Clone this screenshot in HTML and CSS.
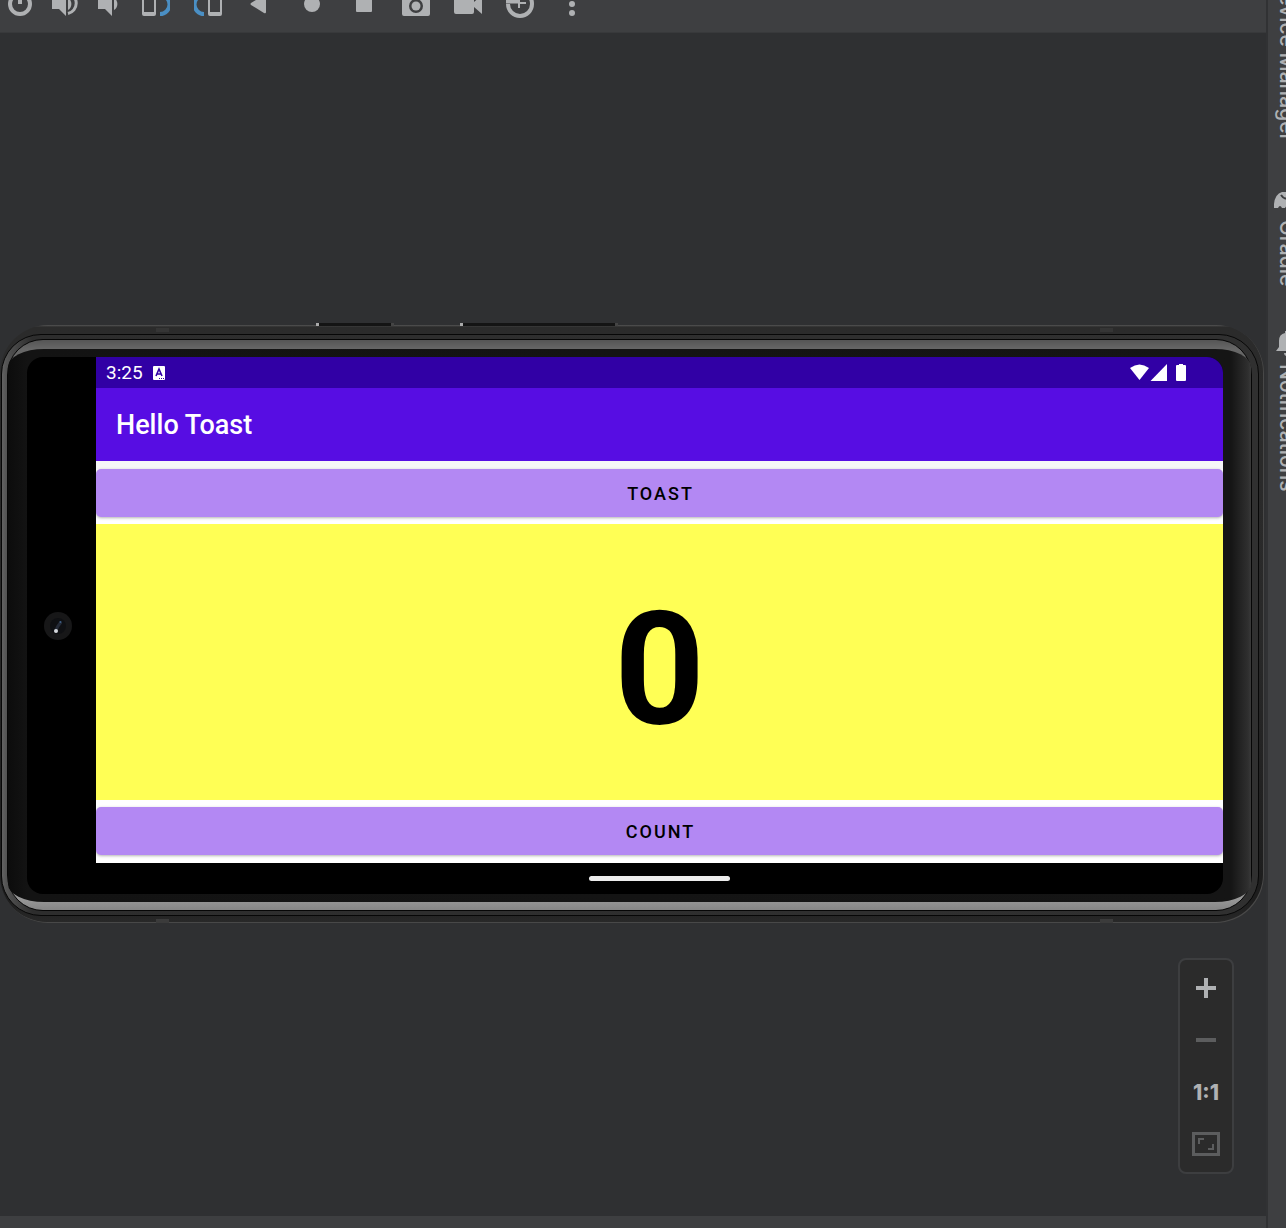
FILE: index.html
```html
<!DOCTYPE html>
<html lang="en">
<head>
<meta charset="utf-8">
<title>Running Devices</title>
<link rel="stylesheet" href="styles.css">
</head>
<body>
<main class="workspace">
  <div class="toolbar">
    <div class="tools tools-tight">
      <button class="tool" aria-label="Power"><svg viewBox="0 0 28 28"><circle cx="14" cy="14" r="10" fill="none" stroke="currentColor" stroke-width="4"/><path d="M12 4h4v10h-4z"/></svg></button>
      <button class="tool" aria-label="Volume up"><svg viewBox="0 0 28 28"><path d="M2 8h7l7-7v25l-7-7H2z"/><path d="M18 8a7 7 0 0 1 0 12z"/><path d="M18 3a10.500 10.500 0 0 1 0 20.500" fill="none" stroke="currentColor" stroke-width="3"/></svg></button>
      <button class="tool" aria-label="Volume down"><svg viewBox="0 0 28 28"><path d="M4 8h7l7-7v25l-7-7H4z"/><path d="M20 8a7 7 0 0 1 0 12z"/></svg></button>
    </div>
    <div class="tools">
      <button class="tool" aria-label="Rotate left"><svg viewBox="0 0 28 28"><path fill-rule="evenodd" d="M2 2h10a2 2 0 0 1 2 2v20a2 2 0 0 1-2 2H2a2 2 0 0 1-2-2V4a2 2 0 0 1 2-2zm0 3v17h10V5z"/><path class="accent" d="M18 5a9.500 9.500 0 0 1 0 19" /></svg></button>
      <button class="tool" aria-label="Rotate right"><svg viewBox="0 0 28 28"><path fill-rule="evenodd" d="M16 2h10a2 2 0 0 1 2 2v20a2 2 0 0 1-2 2H16a2 2 0 0 1-2-2V4a2 2 0 0 1 2-2zm0 3v17h10V5z"/><path class="accent" d="M10 5a9.500 9.500 0 0 0 0 19"/></svg></button>
      <button class="tool" aria-label="Back"><svg viewBox="0 0 28 28"><path d="M20 5v17q0 2-2 1L5 15q-1-1 0-2L18 5q2-1 2 0z"/></svg></button>
      <button class="tool" aria-label="Home"><svg viewBox="0 0 28 28"><circle cx="14" cy="14" r="8"/></svg></button>
      <button class="tool" aria-label="Overview"><svg viewBox="0 0 28 28"><rect x="6" y="6" width="16" height="16" rx="1"/></svg></button>
      <button class="tool" aria-label="Take screenshot"><svg viewBox="0 0 28 28"><path fill-rule="evenodd" d="M8 5l2-3h8l2 3h6a2 2 0 0 1 2 2v17a2 2 0 0 1-2 2H2a2 2 0 0 1-2-2V7a2 2 0 0 1 2-2zM14 9a7 7 0 1 0 0 14 7 7 0 0 0 0-14z"/><circle cx="14" cy="16" r="4.500"/></svg></button>
      <button class="tool" aria-label="Record screen"><svg viewBox="0 0 28 28"><path d="M2 4h16a2 2 0 0 1 2 2v6l8-7v19l-8-7v5a2 2 0 0 1-2 2H2a2 2 0 0 1-2-2V6a2 2 0 0 1 2-2z"/></svg></button>
      <button class="tool" aria-label="Snapshots"><svg viewBox="0 0 28 28"><path d="M0 11.500h12M2 14a12 12 0 0 0 24 0A12 12 0 0 0 6 5" fill="none" stroke="currentColor" stroke-width="4"/><path d="M13 8v10M13 13h7" fill="none" stroke="currentColor" stroke-width="2"/></svg></button>
      <button class="tool" aria-label="More"><svg viewBox="0 0 28 28"><circle cx="14" cy="5" r="3"/><circle cx="14" cy="14" r="3"/><circle cx="14" cy="23" r="3"/></svg></button>
    </div>
  </div>

  <section class="stage">
    <div class="device">
      <span class="side-key key-power"></span>
      <span class="side-key key-volume"></span>
      <span class="seam seam-top seam-left"></span>
      <span class="seam seam-top seam-right"></span>
      <span class="seam seam-bottom seam-left"></span>
      <span class="seam seam-bottom seam-right"></span>
      <div class="frame">
        <div class="gloss">
          <div class="bezel">
            <div class="screen">
              <div class="cutout">
                <svg class="lens" viewBox="0 0 28 28"><circle cx="14" cy="14" r="14" fill="#171718"/><circle cx="14" cy="14" r="8" fill="#0f1013"/><path d="M11 20l3-6 3-4" stroke="#252b38" stroke-width="3" fill="none"/><circle cx="12" cy="19" r="2" fill="#d5d8dc"/><circle cx="16.500" cy="10" r="1" fill="#3d5e86"/></svg>
              </div>
              <div class="app">
                <div class="status-bar">
                  <span>3:25</span>
                  <svg class="app-badge" viewBox="0 0 12 14"><rect width="12" height="14" rx="1" fill="#fff"/><path d="M3 10l3-7 3 7M4 8h4" stroke="#3100a5" stroke-width="1.600" fill="none"/><path d="M6 12.500h5" stroke="#3100a5" stroke-dasharray="1 1"/></svg>
                  <svg class="signals" viewBox="0 0 57 18"><path d="M0 4Q9.500-3 19 4L9.500 16z"/><path d="M37 0v17H20.500z"/><path d="M49 1V0h4v1h2a1 1 0 0 1 1 1v14a1 1 0 0 1-1 1h-8a1 1 0 0 1-1-1V2a1 1 0 0 1 1-1z"/></svg>
                </div>
                <h1 class="app-bar">Hello Toast</h1>
                <div class="content">
                  <button class="action">TOAST</button>
                  <output class="counter">0</output>
                  <button class="action">COUNT</button>
                </div>
                <div class="nav-bar"><span class="nav-handle"></span></div>
              </div>
            </div>
          </div>
        </div>
      </div>
    </div>

    <div class="zoom-controls">
      <button class="zoom-button" aria-label="Zoom in"><svg viewBox="0 0 28 28"><path d="M12 4h4v8h8v4h-8v8h-4v-8H4v-4h8z"/></svg></button>
      <button class="zoom-button dim" aria-label="Zoom out"><svg viewBox="0 0 28 28"><path d="M4 12h20v4H4z"/></svg></button>
      <button class="zoom-button">1:1</button>
      <button class="zoom-button dim" aria-label="Zoom to fit"><svg viewBox="0 0 28 28"><path fill-rule="evenodd" d="M0 2h28v24H0zm3 3v18h22V5zM6 8h6v2H8v4H6zM20 14h2v6h-6v-2h4z"/></svg></button>
    </div>
  </section>
  <div class="bottom-edge"></div>
</main>

<aside class="tool-windows">
  <button class="tab tab-first">Device Manager</button>
  <button class="tab"><svg viewBox="0 0 28 28"><path d="M1 22V18Q2 8 9 6h4q1 5 5 2l3-3q6 0 6 5 0 5-6 6v6h-5q-2-4-4 0H9q-2-4-4 0z"/><path d="M8 9q4 6 9 2" fill="none" stroke="#3c3d3f" stroke-width="2"/></svg>Gradle</button>
  <button class="tab"><svg viewBox="0 0 28 28"><path d="M3 21l3-4V11q0-7 6-8V1h4v2q6 1 6 8v6l3 4zM11 23h6q0 3-3 3t-3-3z"/></svg>Notifications</button>
</aside>
</body>
</html>
```
FILE: styles.css
```css
* { box-sizing: border-box; }

body {
  margin: 0;
  display: flex;
  min-height: 100vh;
  overflow: hidden;
  background: #313234;
  font-family: Roboto, "Liberation Sans", sans-serif;
}

button {
  margin: 0;
  padding: 0;
  border: 0;
  background: none;
  color: inherit;
  font: inherit;
}

svg { display: block; fill: currentColor; }

.workspace {
  flex: 1;
  min-width: 0;
  display: flex;
  flex-direction: column;
  margin-right: 2px;
}

/* Emulator toolbar, scrolled partly out of view */
.toolbar {
  display: flex;
  align-items: flex-end;
  gap: 20px;
  height: 33px;
  padding: 0 6px 14px;
  overflow: hidden;
  background: #3e3f41;
  border-bottom: 1px solid #38393b;
  color: #afb1b3;
}

.tools { display: flex; gap: 24px; }
.tools-tight { gap: 16px; }
.tool, .tool svg { width: 28px; height: 28px; }
.accent { fill: none; stroke: #4a8fc4; stroke-width: 4px; }

.stage {
  position: relative;
  flex: 1;
  padding: 292px 2px 293px 0;
  background: #2f3032;
}

.bottom-edge { height: 12px; background: #3e3f41; }

/* Phone body */
.device {
  position: relative;
  padding: 9px 5px 7px 1px;
  border-radius: 48px;
  background: linear-gradient(#555 0, #2b2b2b 2px, #292929 50%, #1d1d1d 96%, #292929);
  box-shadow: inset -1px -1px #484848;
}

.frame {
  padding: 4px 6px 4px 5px;
  border: 1px solid #070707;
  border-radius: 40px;
  background: linear-gradient(90deg, #626262 0, #555 4px, #2d2d2d 30px, #303030);
}

.gloss {
  padding: 9px 0 8px;
  border: 1px solid #060606;
  border-radius: 36px;
  background: linear-gradient(#555 0, #676767 9px, #444 50%, #999 98%, #858585);
}

.bezel {
  padding: 8px 28px 8px 19px;
  border-radius: 36px / 18px;
  background: linear-gradient(90deg, #0c0c0c, #131313 19px, #151515 calc(100% - 20px), #2f2f2f calc(100% - 3px), #3a3a3a);
}

.side-key {
  position: absolute;
  top: -2px;
  height: 3px;
  border-left: 3px solid #aaa;
  border-right: 3px solid #444;
  background: #141414;
}
.key-power { left: 316px; width: 78px; }
.key-volume { left: 460px; width: 158px; }

.seam { position: absolute; width: 13px; height: 4px; background: #3b3b3b; }
.seam-top { top: 3px; background: #353535; }
.seam-bottom { bottom: 0; }
.seam-left { left: 156px; }
.seam-right { right: 151px; }

.screen {
  display: flex;
  border-radius: 16px;
  overflow: hidden;
  background: #000;
}

.cutout {
  flex: 0 0 69px;
  display: flex;
  align-items: center;
  padding-left: 17px;
}
.lens { width: 28px; height: 28px; }

.app { flex: 1; min-width: 0; color: #fff; }

.status-bar {
  display: flex;
  align-items: center;
  gap: 10px;
  height: 31px;
  padding: 0 36px 0 10px;
  background: #3100a5;
  font-size: 19px;
}
.app-badge { width: 12px; height: 14px; }
.signals { width: 57px; height: 18px; margin-left: auto; }

.app-bar {
  margin: 0;
  padding: 2px 20px 0;
  background: #570de3;
  font-size: 27px;
  font-weight: 500;
  line-height: 71px;
}

.content {
  display: flex;
  flex-direction: column;
  gap: 7px;
  padding: 8px 0;
  background: #fff;
  box-shadow: inset 0 8px #f6f6f8;
}

.action {
  height: 48px;
  padding-left: 2px;
  border-radius: 5px;
  background: #b388f3;
  box-shadow: 0 1px 3px rgba(0, 0, 0, 0.3);
  color: #000;
  font-size: 18px;
  font-weight: 500;
  letter-spacing: 2px;
}

.counter {
  display: flex;
  justify-content: center;
  align-items: center;
  height: 276px;
  padding-top: 14px;
  background: #ffff55;
  color: #000;
  font-size: 158px;
  font-weight: 700;
}

.nav-bar {
  display: flex;
  justify-content: center;
  align-items: center;
  height: 31px;
}
.nav-handle { width: 141px; height: 5px; border-radius: 3px; background: #ececec; }

/* Floating zoom controls */
.zoom-controls {
  position: absolute;
  right: 32px;
  bottom: 42px;
  display: flex;
  flex-direction: column;
  padding: 2px 0;
  border: 2px solid #3d3e40;
  border-radius: 8px;
  background: #2b2b2b;
  color: #afb1b3;
}
.zoom-button {
  display: grid;
  place-items: center;
  width: 52px;
  height: 52px;
  font-family: Inter, "Liberation Sans", sans-serif;
  font-size: 21px;
  font-weight: 800;
}
.zoom-button svg { width: 28px; height: 28px; }
.dim { color: #5c5d5e; }

/* Right tool window strip, running past the window edge */
.tool-windows {
  flex: 0 0 18px;
  display: flex;
  flex-direction: column;
  align-items: flex-start;
  gap: 44px;
  overflow: hidden;
  background: #3e3f41;
  color: #afb1b3;
}
.tab {
  display: flex;
  align-items: center;
  gap: 6px;
  width: 38px;
  writing-mode: vertical-rl;
  font-family: Inter, "Liberation Sans", sans-serif;
  font-size: 21px;
  font-weight: 500;
  line-height: 38px;
  white-space: nowrap;
}
.tab svg { width: 28px; height: 28px; }
.tab-first { height: 142px; justify-content: flex-end; }
```
